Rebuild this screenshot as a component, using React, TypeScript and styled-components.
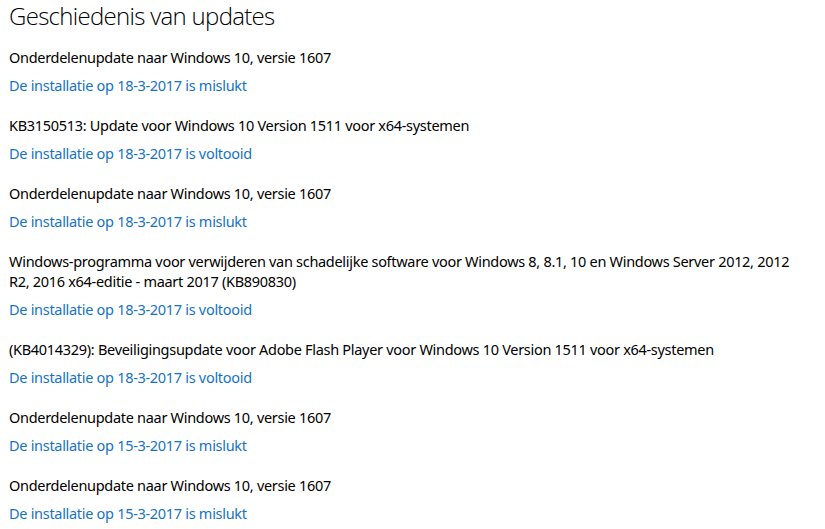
import React from "react";
import styled, { createGlobalStyle } from "styled-components";

const GlobalStyle = createGlobalStyle`
  html, body {
    margin: 0;
    padding: 0;
    background: #ffffff;
  }
  body {
    font-family: "Noto Sans", "Open Sans", sans-serif;
    color: #000000;
  }
`;

const Page = styled.div`
  padding: 0 9px;
  width: 825px;
  box-sizing: border-box;
`;

const Title = styled.h1`
  margin: 0;
  font-family: "Open Sans", "Noto Sans", sans-serif;
  font-weight: 300;
  font-size: 24px;
  letter-spacing: -0.7px;
  line-height: 32px;
  color: #000000;
`;

const List = styled.div`
  display: flex;
  flex-direction: column;
  gap: 20px;
  margin-top: 15px;
`;

const Item = styled.div`
  display: flex;
  flex-direction: column;
  gap: 8px;
`;

const ItemName = styled.div`
  font-size: 14.5px;
  letter-spacing: -0.3px;
  line-height: 20px;
  max-width: 795px;
`;

const StatusLink = styled.a`
  font-size: 14.5px;
  letter-spacing: -0.3px;
  line-height: 20px;
  color: #1473c8;
  text-decoration: none;
  cursor: pointer;
`;

interface Update {
  name: string;
  status: string;
}

const updates: Update[] = [
  {
    name: "Onderdelenupdate naar Windows 10, versie 1607",
    status: "De installatie op 18-3-2017 is mislukt",
  },
  {
    name: "KB3150513: Update voor Windows 10 Version 1511 voor x64-systemen",
    status: "De installatie op 18-3-2017 is voltooid",
  },
  {
    name: "Onderdelenupdate naar Windows 10, versie 1607",
    status: "De installatie op 18-3-2017 is mislukt",
  },
  {
    name: "Windows-programma voor verwijderen van schadelijke software voor Windows 8, 8.1, 10 en Windows Server 2012, 2012 R2, 2016 x64-editie - maart 2017 (KB890830)",
    status: "De installatie op 18-3-2017 is voltooid",
  },
  {
    name: "(KB4014329): Beveiligingsupdate voor Adobe Flash Player voor Windows 10 Version 1511 voor x64-systemen",
    status: "De installatie op 18-3-2017 is voltooid",
  },
  {
    name: "Onderdelenupdate naar Windows 10, versie 1607",
    status: "De installatie op 15-3-2017 is mislukt",
  },
  {
    name: "Onderdelenupdate naar Windows 10, versie 1607",
    status: "De installatie op 15-3-2017 is mislukt",
  },
];

export default function App() {
  return (
    <>
      <GlobalStyle />
      <Page>
        <Title>Geschiedenis van updates</Title>
        <List>
          {updates.map((u, i) => (
            <Item key={i}>
              <ItemName>{u.name}</ItemName>
              <StatusLink>{u.status}</StatusLink>
            </Item>
          ))}
        </List>
      </Page>
    </>
  );
}
